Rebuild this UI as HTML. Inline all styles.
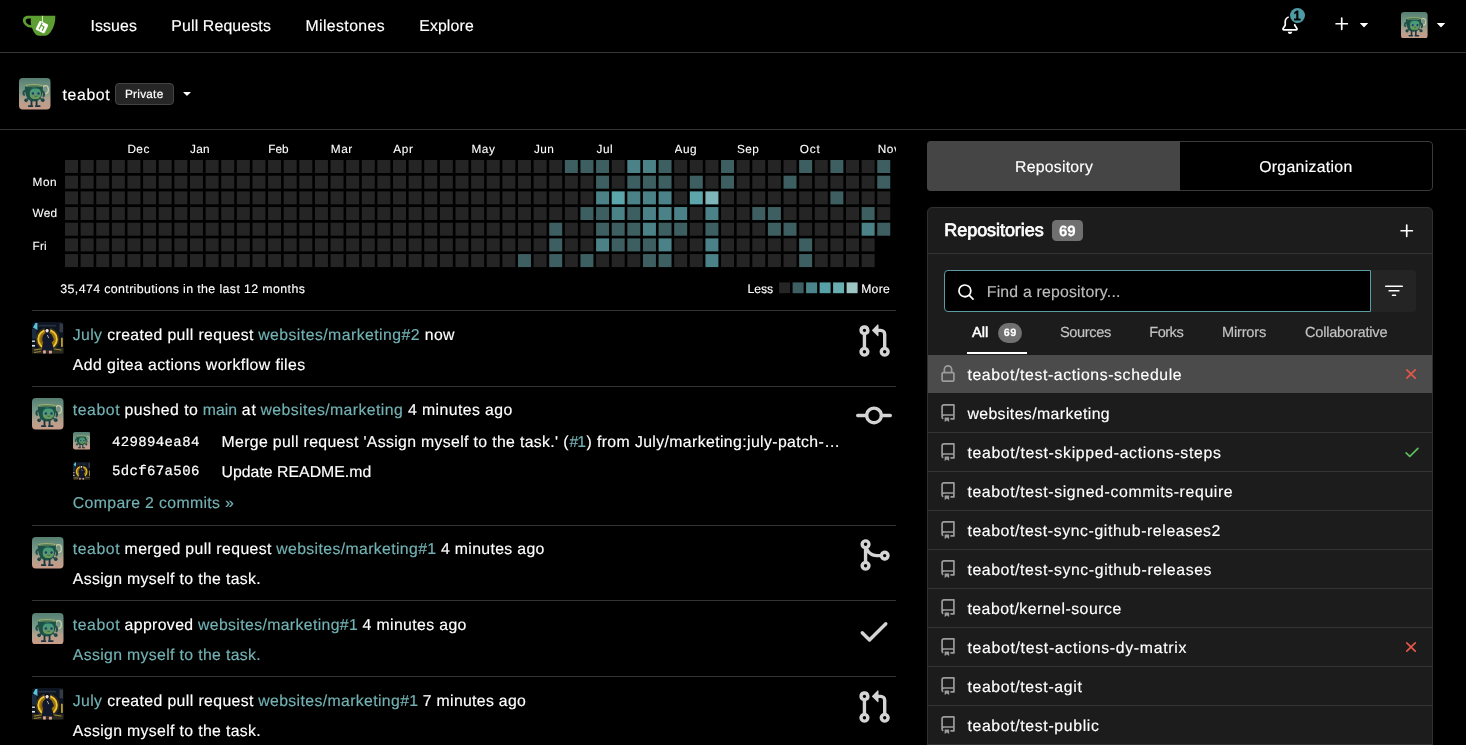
<!DOCTYPE html>
<html lang="en"><head><meta charset="utf-8"><title>teabot - Dashboard - Gitea</title>
<style>
html,body{margin:0;padding:0;background:#000;}
body{width:1466px;height:745px;overflow:hidden;position:relative;font-family:"Liberation Sans",sans-serif;color:#fff;text-rendering:geometricPrecision;}
.abs{position:absolute;display:block;}
.t{position:absolute;white-space:pre;line-height:1;-webkit-text-stroke:0.16px;text-decoration:none;color:#fff;}
#root{position:absolute;left:0;top:0;width:1466px;height:745px;will-change:transform;}
</style></head><body><div id="root">
<svg width="0" height="0" style="position:absolute"><defs><linearGradient id="tbg" x1="0" y1="0" x2="0" y2="1"><stop offset="0" stop-color="#557f72"/><stop offset="0.42" stop-color="#7a9a8a"/><stop offset="0.7" stop-color="#b3a08c"/><stop offset="1" stop-color="#c99c89"/></linearGradient>
<linearGradient id="tface" x1="0" y1="0" x2="0" y2="1"><stop offset="0" stop-color="#3f9a80"/><stop offset="1" stop-color="#6f9a58"/></linearGradient>
<radialGradient id="jglow" cx="0.5" cy="0.5" r="0.5"><stop offset="0" stop-color="#f2c53a"/><stop offset="0.7" stop-color="#d9a21c"/><stop offset="1" stop-color="#6a5418"/></radialGradient></defs></svg>
<nav class="navbar">
<div class="abs" style="left:0px;top:52px;width:1466px;height:1px;background:#363636"></div>
<svg class="abs logo" style="left:22px;top:14px" width="35" height="24" viewBox="0 0 35 24">
<path d="M9.200 1.800H33.300c.300 5.500-1.200 11.500-4.300 15.800c-1.400 2-3 4.200-5.600 4.200H17.300c-2.700 0-4.600-2.300-5.800-4.600c-.6-1.100-1.100-2.300-1.500-3.500C5.300 13.800 1 10.600.900 6.500C.800 3.300 3.400 1.700 6.200 1.800Zm-.300 2.700C5 4.400 3.600 5 3.700 6.700c.2 2.500 2.700 4.300 5.500 4.500c-.5-2.100-.5-4.500-.3-6.700Z" fill="#5c9e31"/>
<path d="M20.500 1.800V8" stroke="#cfe8b6" stroke-width="1.100"/>
<g transform="translate(20 13.100) rotate(26)"><rect x="-4.900" y="-4.900" width="9.800" height="9.800" rx="1.200" fill="#fff"/><path d="M-1.700 -4v7.200M1.700 -1.500v4.700M-1.700 -1.200h2.300c.7 0 1.100.400 1.100 1" stroke="#5c9e31" stroke-width="1.200" fill="none"/></g>
</svg>
<svg class="abs " style="left:1280.7px;top:15.8px" width="18" height="18" viewBox="0 0 16 16" fill="#fff"><path d="M8 16a2 2 0 0 0 1.985-1.750c.017-.137-.097-.250-.235-.250h-3.500c-.138 0-.252.113-.235.250A2 2 0 0 0 8 16ZM3 5a5 5 0 0 1 10 0v2.947c0 .050.015.098.042.139l1.703 2.555A1.519 1.519 0 0 1 13.482 13H2.518a1.516 1.516 0 0 1-1.263-2.360l1.703-2.554A.255.255 0 0 0 3 7.947Zm5-3.500A3.500 3.500 0 0 0 4.500 5v2.947c0 .346-.102.683-.294.970l-1.703 2.556a.017.017 0 0 0-.003.010l.001.006c0 .002.002.004.004.006l.006.004.007.001h10.964l.007-.001.006-.004.004-.006.001-.007a.017.017 0 0 0-.003-.010l-1.703-2.554a1.745 1.745 0 0 1-.294-.970V5A3.500 3.500 0 0 0 8 1.500Z"/></svg>
<div class="abs badge" style="left:1289.8px;top:7.8px;width:15px;height:15px;background:#4f9ba4;border-radius:50%;box-shadow:0 0 0 1.6px #000"></div>
<svg class="abs " style="left:1333px;top:15.2px" width="18" height="18" viewBox="0 0 16 16" fill="#fff"><path d="M7.750 2a.750.750 0 0 1 .750.750V7h4.250a.750.750 0 0 1 0 1.500H8.500v4.250a.750.750 0 0 1-1.500 0V8.500H2.750a.750.750 0 0 1 0-1.500H7V2.750A.750.750 0 0 1 7.750 2Z"/></svg>
<svg class="abs " style="left:1355.1px;top:15.2px" width="18" height="18" viewBox="0 0 16 16" fill="#fff"><path d="m4.427 7.427 3.396 3.396a.250.250 0 0 0 .354 0l3.396-3.396A.250.250 0 0 0 11.396 7H4.604a.250.250 0 0 0-.177.427Z"/></svg>
<svg class="abs avatar" style="left:1401px;top:11.7px" width="26.6" height="26.6" viewBox="0 0 31 31"><rect width="31" height="31" rx="3.600" fill="url(#tbg)"/>
<ellipse cx="26" cy="11.400" rx="2.900" ry="3.900" fill="none" stroke="#cfcaa4" stroke-width="1.300"/>
<path d="M5.900 7.600h17.600c.400 5.200-.500 9.800-2.800 12.900c-2.500 3.400-9.500 3.400-12 0C6.400 17.400 5.500 12.800 5.900 7.600Z" fill="#1d5248"/>
<ellipse cx="14.700" cy="7.600" rx="8.800" ry="1.600" fill="#9fae6b"/>
<ellipse cx="14.700" cy="8" rx="7.400" ry="0.900" fill="#44755a"/>
<rect x="10.600" y="10.300" width="11" height="10.400" rx="4.200" fill="url(#tface)"/>
<circle cx="13.700" cy="15.300" r="1.200" fill="#1d3a70"/><circle cx="19.200" cy="15.300" r="1.200" fill="#1d3a70"/>
<path d="M15.100 17.700q1.400 .9 2.800 0" stroke="#245046" stroke-width=".700" fill="none"/>
<path d="M6.300 12.300c-2.200 .600 -2.500 3 -1.300 4.300M23.300 13c1.600 1.500 1.800 3.300 .8 4.800" stroke="#24504a" stroke-width="2" fill="none" stroke-linecap="round"/>
<circle cx="7" cy="22" r="1.800" fill="#1e3d44"/><circle cx="23.400" cy="21.800" r="1.800" fill="#1e3d44"/>
<path d="M9.200 19.800l-1.900 2M20.500 19.800l2.500 1.800" stroke="#24504a" stroke-width="1.500" stroke-linecap="round"/>
<path d="M12.300 22v5.200M17.300 22v5.200" stroke="#1b3440" stroke-width="1.800"/>
<path d="M9.600 27.600h3.600M16.600 27.600h3.800" stroke="#1b3440" stroke-width="1.800" stroke-linecap="round"/></svg>
<svg class="abs " style="left:1431.7px;top:15.2px" width="18" height="18" viewBox="0 0 16 16" fill="#fff"><path d="m4.427 7.427 3.396 3.396a.250.250 0 0 0 .354 0l3.396-3.396A.250.250 0 0 0 11.396 7H4.604a.250.250 0 0 0-.177.427Z"/></svg>
<a class="t" style="left:90.4px;top:19px;font-size:15.8px;letter-spacing:0.147px;">Issues</a>
<a class="t" style="left:171.3px;top:19px;font-size:15.8px;letter-spacing:0.168px;">Pull Requests</a>
<a class="t" style="left:305.4px;top:19px;font-size:15.8px;letter-spacing:0.420px;">Milestones</a>
<a class="t" style="left:419.2px;top:19px;font-size:15.8px;letter-spacing:0.154px;">Explore</a>
<a class="t" style="left:1293.4px;top:9px;font-size:13px;color:#000;-webkit-text-stroke:0.9px;">1</a>
</nav>
<div class="dashboard-context">
<div class="abs" style="left:0px;top:128.5px;width:1466px;height:1px;background:#363636"></div>
<div class="abs" style="left:115px;top:83px;width:59px;height:22px;box-sizing:border-box;background:#262626;border:1px solid #444;border-radius:4px"></div>
<svg class="abs avatar" style="left:19px;top:78px" width="31.5" height="31.5" viewBox="0 0 31 31"><rect width="31" height="31" rx="3.600" fill="url(#tbg)"/>
<ellipse cx="26" cy="11.400" rx="2.900" ry="3.900" fill="none" stroke="#cfcaa4" stroke-width="1.300"/>
<path d="M5.900 7.600h17.600c.400 5.200-.500 9.800-2.800 12.900c-2.500 3.400-9.500 3.400-12 0C6.400 17.400 5.500 12.800 5.900 7.600Z" fill="#1d5248"/>
<ellipse cx="14.700" cy="7.600" rx="8.800" ry="1.600" fill="#9fae6b"/>
<ellipse cx="14.700" cy="8" rx="7.400" ry="0.900" fill="#44755a"/>
<rect x="10.600" y="10.300" width="11" height="10.400" rx="4.200" fill="url(#tface)"/>
<circle cx="13.700" cy="15.300" r="1.200" fill="#1d3a70"/><circle cx="19.200" cy="15.300" r="1.200" fill="#1d3a70"/>
<path d="M15.100 17.700q1.400 .9 2.800 0" stroke="#245046" stroke-width=".700" fill="none"/>
<path d="M6.300 12.300c-2.200 .600 -2.500 3 -1.300 4.300M23.300 13c1.600 1.500 1.800 3.300 .8 4.800" stroke="#24504a" stroke-width="2" fill="none" stroke-linecap="round"/>
<circle cx="7" cy="22" r="1.800" fill="#1e3d44"/><circle cx="23.400" cy="21.800" r="1.800" fill="#1e3d44"/>
<path d="M9.200 19.800l-1.900 2M20.500 19.800l2.500 1.800" stroke="#24504a" stroke-width="1.500" stroke-linecap="round"/>
<path d="M12.300 22v5.200M17.300 22v5.200" stroke="#1b3440" stroke-width="1.800"/>
<path d="M9.600 27.600h3.600M16.600 27.600h3.800" stroke="#1b3440" stroke-width="1.800" stroke-linecap="round"/></svg>
<svg class="abs " style="left:179.3px;top:85.0px" width="16" height="16" viewBox="0 0 16 16" fill="#fff"><path d="m4.427 7.427 3.396 3.396a.250.250 0 0 0 .354 0l3.396-3.396A.250.250 0 0 0 11.396 7H4.604a.250.250 0 0 0-.177.427Z"/></svg>
<span class="t" style="left:62.5px;top:88px;font-size:15.8px;letter-spacing:0.654px;">teabot</span>
<span class="t" style="left:125.0px;top:89px;font-size:11.8px;letter-spacing:0.246px;-webkit-text-stroke:0.2px;">Private</span>
</div>
<main class="dashboard-feeds">
<section class="heatmap">

<svg class="abs" style="left:0;top:0" width="900" height="300"><g fill="#252525"><rect x="65.00" y="160.00" width="13" height="13"/><rect x="65.00" y="175.68" width="13" height="13"/><rect x="65.00" y="191.36" width="13" height="13"/><rect x="65.00" y="207.04" width="13" height="13"/><rect x="65.00" y="222.72" width="13" height="13"/><rect x="65.00" y="238.40" width="13" height="13"/><rect x="65.00" y="254.08" width="13" height="13"/><rect x="80.62" y="160.00" width="13" height="13"/><rect x="80.62" y="175.68" width="13" height="13"/><rect x="80.62" y="191.36" width="13" height="13"/><rect x="80.62" y="207.04" width="13" height="13"/><rect x="80.62" y="222.72" width="13" height="13"/><rect x="80.62" y="238.40" width="13" height="13"/><rect x="80.62" y="254.08" width="13" height="13"/><rect x="96.24" y="160.00" width="13" height="13"/><rect x="96.24" y="175.68" width="13" height="13"/><rect x="96.24" y="191.36" width="13" height="13"/><rect x="96.24" y="207.04" width="13" height="13"/><rect x="96.24" y="222.72" width="13" height="13"/><rect x="96.24" y="238.40" width="13" height="13"/><rect x="96.24" y="254.08" width="13" height="13"/><rect x="111.86" y="160.00" width="13" height="13"/><rect x="111.86" y="175.68" width="13" height="13"/><rect x="111.86" y="191.36" width="13" height="13"/><rect x="111.86" y="207.04" width="13" height="13"/><rect x="111.86" y="222.72" width="13" height="13"/><rect x="111.86" y="238.40" width="13" height="13"/><rect x="111.86" y="254.08" width="13" height="13"/><rect x="127.48" y="160.00" width="13" height="13"/><rect x="127.48" y="175.68" width="13" height="13"/><rect x="127.48" y="191.36" width="13" height="13"/><rect x="127.48" y="207.04" width="13" height="13"/><rect x="127.48" y="222.72" width="13" height="13"/><rect x="127.48" y="238.40" width="13" height="13"/><rect x="127.48" y="254.08" width="13" height="13"/><rect x="143.10" y="160.00" width="13" height="13"/><rect x="143.10" y="175.68" width="13" height="13"/><rect x="143.10" y="191.36" width="13" height="13"/><rect x="143.10" y="207.04" width="13" height="13"/><rect x="143.10" y="222.72" width="13" height="13"/><rect x="143.10" y="238.40" width="13" height="13"/><rect x="143.10" y="254.08" width="13" height="13"/><rect x="158.72" y="160.00" width="13" height="13"/><rect x="158.72" y="175.68" width="13" height="13"/><rect x="158.72" y="191.36" width="13" height="13"/><rect x="158.72" y="207.04" width="13" height="13"/><rect x="158.72" y="222.72" width="13" height="13"/><rect x="158.72" y="238.40" width="13" height="13"/><rect x="158.72" y="254.08" width="13" height="13"/><rect x="174.34" y="160.00" width="13" height="13"/><rect x="174.34" y="175.68" width="13" height="13"/><rect x="174.34" y="191.36" width="13" height="13"/><rect x="174.34" y="207.04" width="13" height="13"/><rect x="174.34" y="222.72" width="13" height="13"/><rect x="174.34" y="238.40" width="13" height="13"/><rect x="174.34" y="254.08" width="13" height="13"/><rect x="189.96" y="160.00" width="13" height="13"/><rect x="189.96" y="175.68" width="13" height="13"/><rect x="189.96" y="191.36" width="13" height="13"/><rect x="189.96" y="207.04" width="13" height="13"/><rect x="189.96" y="222.72" width="13" height="13"/><rect x="189.96" y="238.40" width="13" height="13"/><rect x="189.96" y="254.08" width="13" height="13"/><rect x="205.58" y="160.00" width="13" height="13"/><rect x="205.58" y="175.68" width="13" height="13"/><rect x="205.58" y="191.36" width="13" height="13"/><rect x="205.58" y="207.04" width="13" height="13"/><rect x="205.58" y="222.72" width="13" height="13"/><rect x="205.58" y="238.40" width="13" height="13"/><rect x="205.58" y="254.08" width="13" height="13"/><rect x="221.20" y="160.00" width="13" height="13"/><rect x="221.20" y="175.68" width="13" height="13"/><rect x="221.20" y="191.36" width="13" height="13"/><rect x="221.20" y="207.04" width="13" height="13"/><rect x="221.20" y="222.72" width="13" height="13"/><rect x="221.20" y="238.40" width="13" height="13"/><rect x="221.20" y="254.08" width="13" height="13"/><rect x="236.82" y="160.00" width="13" height="13"/><rect x="236.82" y="175.68" width="13" height="13"/><rect x="236.82" y="191.36" width="13" height="13"/><rect x="236.82" y="207.04" width="13" height="13"/><rect x="236.82" y="222.72" width="13" height="13"/><rect x="236.82" y="238.40" width="13" height="13"/><rect x="236.82" y="254.08" width="13" height="13"/><rect x="252.44" y="160.00" width="13" height="13"/><rect x="252.44" y="175.68" width="13" height="13"/><rect x="252.44" y="191.36" width="13" height="13"/><rect x="252.44" y="207.04" width="13" height="13"/><rect x="252.44" y="222.72" width="13" height="13"/><rect x="252.44" y="238.40" width="13" height="13"/><rect x="252.44" y="254.08" width="13" height="13"/><rect x="268.06" y="160.00" width="13" height="13"/><rect x="268.06" y="175.68" width="13" height="13"/><rect x="268.06" y="191.36" width="13" height="13"/><rect x="268.06" y="207.04" width="13" height="13"/><rect x="268.06" y="222.72" width="13" height="13"/><rect x="268.06" y="238.40" width="13" height="13"/><rect x="268.06" y="254.08" width="13" height="13"/><rect x="283.68" y="160.00" width="13" height="13"/><rect x="283.68" y="175.68" width="13" height="13"/><rect x="283.68" y="191.36" width="13" height="13"/><rect x="283.68" y="207.04" width="13" height="13"/><rect x="283.68" y="222.72" width="13" height="13"/><rect x="283.68" y="238.40" width="13" height="13"/><rect x="283.68" y="254.08" width="13" height="13"/><rect x="299.30" y="160.00" width="13" height="13"/><rect x="299.30" y="175.68" width="13" height="13"/><rect x="299.30" y="191.36" width="13" height="13"/><rect x="299.30" y="207.04" width="13" height="13"/><rect x="299.30" y="222.72" width="13" height="13"/><rect x="299.30" y="238.40" width="13" height="13"/><rect x="299.30" y="254.08" width="13" height="13"/><rect x="314.92" y="160.00" width="13" height="13"/><rect x="314.92" y="175.68" width="13" height="13"/><rect x="314.92" y="191.36" width="13" height="13"/><rect x="314.92" y="207.04" width="13" height="13"/><rect x="314.92" y="222.72" width="13" height="13"/><rect x="314.92" y="238.40" width="13" height="13"/><rect x="314.92" y="254.08" width="13" height="13"/><rect x="330.54" y="160.00" width="13" height="13"/><rect x="330.54" y="175.68" width="13" height="13"/><rect x="330.54" y="191.36" width="13" height="13"/><rect x="330.54" y="207.04" width="13" height="13"/><rect x="330.54" y="222.72" width="13" height="13"/><rect x="330.54" y="238.40" width="13" height="13"/><rect x="330.54" y="254.08" width="13" height="13"/><rect x="346.16" y="160.00" width="13" height="13"/><rect x="346.16" y="175.68" width="13" height="13"/><rect x="346.16" y="191.36" width="13" height="13"/><rect x="346.16" y="207.04" width="13" height="13"/><rect x="346.16" y="222.72" width="13" height="13"/><rect x="346.16" y="238.40" width="13" height="13"/><rect x="346.16" y="254.08" width="13" height="13"/><rect x="361.78" y="160.00" width="13" height="13"/><rect x="361.78" y="175.68" width="13" height="13"/><rect x="361.78" y="191.36" width="13" height="13"/><rect x="361.78" y="207.04" width="13" height="13"/><rect x="361.78" y="222.72" width="13" height="13"/><rect x="361.78" y="238.40" width="13" height="13"/><rect x="361.78" y="254.08" width="13" height="13"/><rect x="377.40" y="160.00" width="13" height="13"/><rect x="377.40" y="175.68" width="13" height="13"/><rect x="377.40" y="191.36" width="13" height="13"/><rect x="377.40" y="207.04" width="13" height="13"/><rect x="377.40" y="222.72" width="13" height="13"/><rect x="377.40" y="238.40" width="13" height="13"/><rect x="377.40" y="254.08" width="13" height="13"/><rect x="393.02" y="160.00" width="13" height="13"/><rect x="393.02" y="175.68" width="13" height="13"/><rect x="393.02" y="191.36" width="13" height="13"/><rect x="393.02" y="207.04" width="13" height="13"/><rect x="393.02" y="222.72" width="13" height="13"/><rect x="393.02" y="238.40" width="13" height="13"/><rect x="393.02" y="254.08" width="13" height="13"/><rect x="408.64" y="160.00" width="13" height="13"/><rect x="408.64" y="175.68" width="13" height="13"/><rect x="408.64" y="191.36" width="13" height="13"/><rect x="408.64" y="207.04" width="13" height="13"/><rect x="408.64" y="222.72" width="13" height="13"/><rect x="408.64" y="238.40" width="13" height="13"/><rect x="408.64" y="254.08" width="13" height="13"/><rect x="424.26" y="160.00" width="13" height="13"/><rect x="424.26" y="175.68" width="13" height="13"/><rect x="424.26" y="191.36" width="13" height="13"/><rect x="424.26" y="207.04" width="13" height="13"/><rect x="424.26" y="222.72" width="13" height="13"/><rect x="424.26" y="238.40" width="13" height="13"/><rect x="424.26" y="254.08" width="13" height="13"/><rect x="439.88" y="160.00" width="13" height="13"/><rect x="439.88" y="175.68" width="13" height="13"/><rect x="439.88" y="191.36" width="13" height="13"/><rect x="439.88" y="207.04" width="13" height="13"/><rect x="439.88" y="222.72" width="13" height="13"/><rect x="439.88" y="238.40" width="13" height="13"/><rect x="439.88" y="254.08" width="13" height="13"/><rect x="455.50" y="160.00" width="13" height="13"/><rect x="455.50" y="175.68" width="13" height="13"/><rect x="455.50" y="191.36" width="13" height="13"/><rect x="455.50" y="207.04" width="13" height="13"/><rect x="455.50" y="222.72" width="13" height="13"/><rect x="455.50" y="238.40" width="13" height="13"/><rect x="455.50" y="254.08" width="13" height="13"/><rect x="471.12" y="160.00" width="13" height="13"/><rect x="471.12" y="175.68" width="13" height="13"/><rect x="471.12" y="191.36" width="13" height="13"/><rect x="471.12" y="207.04" width="13" height="13"/><rect x="471.12" y="222.72" width="13" height="13"/><rect x="471.12" y="238.40" width="13" height="13"/><rect x="471.12" y="254.08" width="13" height="13"/><rect x="486.74" y="160.00" width="13" height="13"/><rect x="486.74" y="175.68" width="13" height="13"/><rect x="486.74" y="191.36" width="13" height="13"/><rect x="486.74" y="207.04" width="13" height="13"/><rect x="486.74" y="222.72" width="13" height="13"/><rect x="486.74" y="238.40" width="13" height="13"/><rect x="486.74" y="254.08" width="13" height="13"/><rect x="502.36" y="160.00" width="13" height="13"/><rect x="502.36" y="175.68" width="13" height="13"/><rect x="502.36" y="191.36" width="13" height="13"/><rect x="502.36" y="207.04" width="13" height="13"/><rect x="502.36" y="222.72" width="13" height="13"/><rect x="502.36" y="238.40" width="13" height="13"/><rect x="502.36" y="254.08" width="13" height="13"/><rect x="517.98" y="160.00" width="13" height="13"/><rect x="517.98" y="175.68" width="13" height="13"/><rect x="517.98" y="191.36" width="13" height="13"/><rect x="517.98" y="207.04" width="13" height="13"/><rect x="517.98" y="222.72" width="13" height="13"/><rect x="517.98" y="238.40" width="13" height="13"/><rect x="533.60" y="160.00" width="13" height="13"/><rect x="533.60" y="175.68" width="13" height="13"/><rect x="533.60" y="191.36" width="13" height="13"/><rect x="533.60" y="207.04" width="13" height="13"/><rect x="533.60" y="222.72" width="13" height="13"/><rect x="533.60" y="238.40" width="13" height="13"/><rect x="533.60" y="254.08" width="13" height="13"/><rect x="549.22" y="160.00" width="13" height="13"/><rect x="549.22" y="175.68" width="13" height="13"/><rect x="549.22" y="191.36" width="13" height="13"/><rect x="549.22" y="207.04" width="13" height="13"/><rect x="564.84" y="175.68" width="13" height="13"/><rect x="564.84" y="191.36" width="13" height="13"/><rect x="564.84" y="207.04" width="13" height="13"/><rect x="564.84" y="222.72" width="13" height="13"/><rect x="564.84" y="238.40" width="13" height="13"/><rect x="564.84" y="254.08" width="13" height="13"/><rect x="580.46" y="175.68" width="13" height="13"/><rect x="580.46" y="191.36" width="13" height="13"/><rect x="580.46" y="222.72" width="13" height="13"/><rect x="580.46" y="238.40" width="13" height="13"/><rect x="596.08" y="254.08" width="13" height="13"/><rect x="611.70" y="160.00" width="13" height="13"/><rect x="611.70" y="175.68" width="13" height="13"/><rect x="611.70" y="254.08" width="13" height="13"/><rect x="627.32" y="254.08" width="13" height="13"/><rect x="674.18" y="160.00" width="13" height="13"/><rect x="674.18" y="175.68" width="13" height="13"/><rect x="674.18" y="191.36" width="13" height="13"/><rect x="674.18" y="238.40" width="13" height="13"/><rect x="674.18" y="254.08" width="13" height="13"/><rect x="689.80" y="160.00" width="13" height="13"/><rect x="689.80" y="207.04" width="13" height="13"/><rect x="689.80" y="222.72" width="13" height="13"/><rect x="689.80" y="238.40" width="13" height="13"/><rect x="689.80" y="254.08" width="13" height="13"/><rect x="705.42" y="160.00" width="13" height="13"/><rect x="705.42" y="175.68" width="13" height="13"/><rect x="721.04" y="191.36" width="13" height="13"/><rect x="721.04" y="207.04" width="13" height="13"/><rect x="721.04" y="222.72" width="13" height="13"/><rect x="721.04" y="238.40" width="13" height="13"/><rect x="721.04" y="254.08" width="13" height="13"/><rect x="736.66" y="160.00" width="13" height="13"/><rect x="736.66" y="175.68" width="13" height="13"/><rect x="736.66" y="191.36" width="13" height="13"/><rect x="736.66" y="207.04" width="13" height="13"/><rect x="736.66" y="222.72" width="13" height="13"/><rect x="736.66" y="238.40" width="13" height="13"/><rect x="736.66" y="254.08" width="13" height="13"/><rect x="752.28" y="160.00" width="13" height="13"/><rect x="752.28" y="175.68" width="13" height="13"/><rect x="752.28" y="191.36" width="13" height="13"/><rect x="752.28" y="222.72" width="13" height="13"/><rect x="752.28" y="238.40" width="13" height="13"/><rect x="752.28" y="254.08" width="13" height="13"/><rect x="767.90" y="160.00" width="13" height="13"/><rect x="767.90" y="175.68" width="13" height="13"/><rect x="767.90" y="191.36" width="13" height="13"/><rect x="767.90" y="238.40" width="13" height="13"/><rect x="767.90" y="254.08" width="13" height="13"/><rect x="783.52" y="160.00" width="13" height="13"/><rect x="783.52" y="191.36" width="13" height="13"/><rect x="783.52" y="207.04" width="13" height="13"/><rect x="783.52" y="238.40" width="13" height="13"/><rect x="783.52" y="254.08" width="13" height="13"/><rect x="799.14" y="175.68" width="13" height="13"/><rect x="799.14" y="191.36" width="13" height="13"/><rect x="799.14" y="207.04" width="13" height="13"/><rect x="799.14" y="222.72" width="13" height="13"/><rect x="814.76" y="160.00" width="13" height="13"/><rect x="814.76" y="175.68" width="13" height="13"/><rect x="814.76" y="191.36" width="13" height="13"/><rect x="814.76" y="207.04" width="13" height="13"/><rect x="814.76" y="222.72" width="13" height="13"/><rect x="814.76" y="238.40" width="13" height="13"/><rect x="814.76" y="254.08" width="13" height="13"/><rect x="830.38" y="175.68" width="13" height="13"/><rect x="830.38" y="207.04" width="13" height="13"/><rect x="830.38" y="222.72" width="13" height="13"/><rect x="830.38" y="238.40" width="13" height="13"/><rect x="830.38" y="254.08" width="13" height="13"/><rect x="846.00" y="160.00" width="13" height="13"/><rect x="846.00" y="175.68" width="13" height="13"/><rect x="846.00" y="191.36" width="13" height="13"/><rect x="846.00" y="207.04" width="13" height="13"/><rect x="846.00" y="222.72" width="13" height="13"/><rect x="846.00" y="238.40" width="13" height="13"/><rect x="846.00" y="254.08" width="13" height="13"/><rect x="861.62" y="160.00" width="13" height="13"/><rect x="861.62" y="175.68" width="13" height="13"/><rect x="861.62" y="191.36" width="13" height="13"/><rect x="861.62" y="238.40" width="13" height="13"/><rect x="861.62" y="254.08" width="13" height="13"/><rect x="877.24" y="191.36" width="13" height="13"/><rect x="877.24" y="207.04" width="13" height="13"/></g>
<g fill="#3d5f61"><rect x="517.98" y="254.08" width="13" height="13"/><rect x="549.22" y="222.72" width="13" height="13"/><rect x="549.22" y="238.40" width="13" height="13"/><rect x="549.22" y="254.08" width="13" height="13"/><rect x="564.84" y="160.00" width="13" height="13"/><rect x="580.46" y="160.00" width="13" height="13"/><rect x="580.46" y="207.04" width="13" height="13"/><rect x="580.46" y="254.08" width="13" height="13"/><rect x="596.08" y="160.00" width="13" height="13"/><rect x="596.08" y="175.68" width="13" height="13"/><rect x="596.08" y="207.04" width="13" height="13"/><rect x="596.08" y="222.72" width="13" height="13"/><rect x="611.70" y="222.72" width="13" height="13"/><rect x="611.70" y="238.40" width="13" height="13"/><rect x="627.32" y="175.68" width="13" height="13"/><rect x="627.32" y="207.04" width="13" height="13"/><rect x="627.32" y="222.72" width="13" height="13"/><rect x="627.32" y="238.40" width="13" height="13"/><rect x="642.94" y="175.68" width="13" height="13"/><rect x="642.94" y="238.40" width="13" height="13"/><rect x="642.94" y="254.08" width="13" height="13"/><rect x="658.56" y="160.00" width="13" height="13"/><rect x="658.56" y="175.68" width="13" height="13"/><rect x="658.56" y="222.72" width="13" height="13"/><rect x="658.56" y="254.08" width="13" height="13"/><rect x="674.18" y="222.72" width="13" height="13"/><rect x="689.80" y="175.68" width="13" height="13"/><rect x="705.42" y="222.72" width="13" height="13"/><rect x="721.04" y="160.00" width="13" height="13"/><rect x="721.04" y="175.68" width="13" height="13"/><rect x="752.28" y="207.04" width="13" height="13"/><rect x="767.90" y="207.04" width="13" height="13"/><rect x="767.90" y="222.72" width="13" height="13"/><rect x="783.52" y="175.68" width="13" height="13"/><rect x="783.52" y="222.72" width="13" height="13"/><rect x="799.14" y="160.00" width="13" height="13"/><rect x="799.14" y="238.40" width="13" height="13"/><rect x="799.14" y="254.08" width="13" height="13"/><rect x="830.38" y="160.00" width="13" height="13"/><rect x="830.38" y="191.36" width="13" height="13"/><rect x="861.62" y="207.04" width="13" height="13"/><rect x="877.24" y="160.00" width="13" height="13"/><rect x="877.24" y="175.68" width="13" height="13"/><rect x="877.24" y="222.72" width="13" height="13"/></g>
<g fill="#4a8288"><rect x="596.08" y="191.36" width="13" height="13"/><rect x="596.08" y="238.40" width="13" height="13"/><rect x="611.70" y="207.04" width="13" height="13"/><rect x="627.32" y="160.00" width="13" height="13"/><rect x="627.32" y="191.36" width="13" height="13"/><rect x="642.94" y="160.00" width="13" height="13"/><rect x="642.94" y="191.36" width="13" height="13"/><rect x="642.94" y="207.04" width="13" height="13"/><rect x="642.94" y="222.72" width="13" height="13"/><rect x="658.56" y="191.36" width="13" height="13"/><rect x="658.56" y="207.04" width="13" height="13"/><rect x="658.56" y="238.40" width="13" height="13"/><rect x="674.18" y="207.04" width="13" height="13"/><rect x="705.42" y="207.04" width="13" height="13"/><rect x="705.42" y="238.40" width="13" height="13"/><rect x="705.42" y="254.08" width="13" height="13"/><rect x="861.62" y="222.72" width="13" height="13"/></g>
<g fill="#5ba5ab"><rect x="611.70" y="191.36" width="13" height="13"/><rect x="689.80" y="191.36" width="13" height="13"/></g>
<g fill="#7fb6ba"><rect x="705.42" y="191.36" width="13" height="13"/></g>
<rect x="779.10" y="282.4" width="11" height="10.8" fill="#252525"/><rect x="792.60" y="282.4" width="11" height="10.8" fill="#3d5f61"/><rect x="806.10" y="282.4" width="11" height="10.8" fill="#4b858b"/><rect x="819.60" y="282.4" width="11" height="10.8" fill="#58a0a8"/><rect x="833.10" y="282.4" width="11" height="10.8" fill="#68aeb0"/><rect x="846.60" y="282.4" width="11" height="10.8" fill="#9cc5c3"/></svg>

<span class="t" style="left:127.4px;top:144px;font-size:11.8px;letter-spacing:0.458px;-webkit-text-stroke:0.1px;max-width:768.2px;overflow:hidden;">Dec</span>
<span class="t" style="left:190.0px;top:144px;font-size:11.8px;letter-spacing:0.237px;-webkit-text-stroke:0.1px;max-width:705.6px;overflow:hidden;">Jan</span>
<span class="t" style="left:268.3px;top:144px;font-size:11.8px;letter-spacing:-0.017px;-webkit-text-stroke:0.1px;max-width:627.3px;overflow:hidden;">Feb</span>
<span class="t" style="left:330.8px;top:144px;font-size:11.8px;letter-spacing:0.589px;-webkit-text-stroke:0.1px;max-width:564.8px;overflow:hidden;">Mar</span>
<span class="t" style="left:393.3px;top:144px;font-size:11.8px;letter-spacing:0.618px;-webkit-text-stroke:0.1px;max-width:502.3px;overflow:hidden;">Apr</span>
<span class="t" style="left:471.4px;top:144px;font-size:11.8px;letter-spacing:0.604px;-webkit-text-stroke:0.1px;max-width:424.2px;overflow:hidden;">May</span>
<span class="t" style="left:533.9px;top:144px;font-size:11.8px;letter-spacing:0.487px;-webkit-text-stroke:0.1px;max-width:361.7px;overflow:hidden;">Jun</span>
<span class="t" style="left:596.4px;top:144px;font-size:11.8px;letter-spacing:0.608px;-webkit-text-stroke:0.1px;max-width:299.2px;overflow:hidden;">Jul</span>
<span class="t" style="left:674.6px;top:144px;font-size:11.8px;letter-spacing:0.502px;-webkit-text-stroke:0.1px;max-width:221.0px;overflow:hidden;">Aug</span>
<span class="t" style="left:737.1px;top:144px;font-size:11.8px;letter-spacing:0.302px;-webkit-text-stroke:0.1px;max-width:158.5px;overflow:hidden;">Sep</span>
<span class="t" style="left:799.7px;top:144px;font-size:11.8px;letter-spacing:0.922px;-webkit-text-stroke:0.1px;max-width:95.9px;overflow:hidden;">Oct</span>
<span class="t" style="left:877.8px;top:144px;font-size:11.8px;letter-spacing:0.508px;-webkit-text-stroke:0.1px;max-width:17.8px;overflow:hidden;">Nov</span>
<span class="t" style="left:32.5px;top:177px;font-size:11.8px;letter-spacing:0.572px;-webkit-text-stroke:0.1px;">Mon</span>
<span class="t" style="left:32.5px;top:208px;font-size:11.8px;letter-spacing:0.225px;-webkit-text-stroke:0.1px;">Wed</span>
<span class="t" style="left:32.5px;top:241px;font-size:11.8px;letter-spacing:0.170px;-webkit-text-stroke:0.1px;">Fri</span>
<span class="t" style="left:60.3px;top:283px;font-size:12.4px;letter-spacing:0.370px;-webkit-text-stroke:0.12px;">35,474 contributions in the last 12 months</span>
<span class="t" style="left:747.5px;top:283px;font-size:12.2px;letter-spacing:-0.024px;-webkit-text-stroke:0.12px;">Less</span>
<span class="t" style="left:861.2px;top:283px;font-size:12.2px;letter-spacing:0.268px;-webkit-text-stroke:0.12px;">More</span>
</section>
<section class="feeds">
<div class="abs" style="left:32px;top:310px;width:864px;height:1px;background:#333"></div>
<div class="abs" style="left:32px;top:386px;width:864px;height:1px;background:#333"></div>
<div class="abs" style="left:32px;top:525px;width:864px;height:1px;background:#333"></div>
<div class="abs" style="left:32px;top:600px;width:864px;height:1px;background:#333"></div>
<div class="abs" style="left:32px;top:676px;width:864px;height:1px;background:#333"></div>
<svg class="abs avatar" style="left:32px;top:322.2px" width="31.5" height="31.5" viewBox="0 0 32 32"><rect width="32" height="32" rx="3.600" fill="#0e1522"/>
<path d="M1 5.500L3.500 1h2v7.500Z" fill="#5cc3d6"/>
<rect x="0" y="7" width="4.500" height="10" fill="#1c2c40"/>
<rect x="28" y="1.500" width="3.500" height="9" fill="#353b42"/>
<rect x="6.500" y="2.800" width="18" height="1.800" fill="#27303c"/>
<rect x="0" y="26.500" width="32" height="5.500" fill="#2c2a1e"/>
<path d="M2 28.500l9 -1.500M20 27l10 1.500M2 31l7 -1" stroke="#a08a3a" stroke-width="1"/>
<circle cx="15.800" cy="17.600" r="12" fill="#6a4d10" opacity=".45"/>
<circle cx="15.800" cy="17.600" r="9.500" fill="#9a7210" stroke="#f0c530" stroke-width="1.900"/>
<circle cx="14.800" cy="18" r="6" fill="#5b3f0c" opacity=".4"/>
<rect x="29.600" y="16" width="1.600" height="9.300" fill="#d9b224"/>
<rect x="0" y="18.800" width="3" height="1.500" fill="#c6d0d0"/><rect x="0" y="23.300" width="3" height="1.700" fill="#dfe5e5"/>
<path d="M15.300 4.600c2.400 0 3.600 2 3.200 4.300c-.2 1-.6 1.700-1 2.200c1.800 .5 2.800 1.600 3.300 3.300c.5 1.700 1.600 2.200 1.400 3.600c-.2 1.300-1.800 1.700-2.300 2.900c1.300 2.500 2.300 5.300 2.300 8.100h-12c-.2-2.700 .2-5.300 1.300-7.800c-.8-1.500-1.300-3.200-.9-5c.4-2.200 1.300-4.200 3.300-5.100c-.7-.7-1.100-1.500-1.200-2.500c-.2-2.200 .8-4 2.600-4Z" fill="#11182c"/>
<ellipse cx="15.300" cy="8.700" rx="1.600" ry="1.900" fill="#f1e3e3"/>
<path d="M12.800 8c.3-3 4.700-3.200 5.200-.2c-1.600-1-3.500-.8-5.200 .2Z" fill="#0a0d16"/>
<path d="M15.600 13.200l1.400 3.200" stroke="#c9c2b0" stroke-width=".900"/>
<rect x="11.300" y="28.800" width="2.700" height="3.200" fill="#e3aaa3"/><rect x="17.200" y="29.200" width="3" height="2.800" fill="#dca29a"/></svg>
<svg class="abs " style="left:856px;top:322.5px" width="36" height="36" viewBox="0 0 16 16" fill="#d4d4d4"><path d="M1.500 3.250a2.250 2.250 0 1 1 3 2.122v5.256a2.251 2.251 0 1 1-1.500 0V5.372A2.250 2.250 0 0 1 1.500 3.250Zm5.677-.177L9.573.677A.250.250 0 0 1 10 .854V2.500h1A2.500 2.500 0 0 1 13.500 5v5.628a2.251 2.251 0 1 1-1.500 0V5a1 1 0 0 0-1-1h-1v1.646a.250.250 0 0 1-.427.177L7.177 3.427a.250.250 0 0 1 0-.354ZM3.750 2.500a.750.750 0 1 0 0 1.500.750.750 0 0 0 0-1.500Zm0 9.500a.750.750 0 1 0 0 1.500.750.750 0 0 0 0-1.500Zm8.250.750a.750.750 0 1 0 1.500 0 .750.750 0 0 0-1.500 0Z"/></svg>
<svg class="abs avatar" style="left:32px;top:398.2px" width="31.5" height="31.5" viewBox="0 0 31 31"><rect width="31" height="31" rx="3.600" fill="url(#tbg)"/>
<ellipse cx="26" cy="11.400" rx="2.900" ry="3.900" fill="none" stroke="#cfcaa4" stroke-width="1.300"/>
<path d="M5.900 7.600h17.600c.400 5.200-.500 9.800-2.800 12.900c-2.500 3.400-9.500 3.400-12 0C6.400 17.400 5.500 12.800 5.900 7.600Z" fill="#1d5248"/>
<ellipse cx="14.700" cy="7.600" rx="8.800" ry="1.600" fill="#9fae6b"/>
<ellipse cx="14.700" cy="8" rx="7.400" ry="0.900" fill="#44755a"/>
<rect x="10.600" y="10.300" width="11" height="10.400" rx="4.200" fill="url(#tface)"/>
<circle cx="13.700" cy="15.300" r="1.200" fill="#1d3a70"/><circle cx="19.200" cy="15.300" r="1.200" fill="#1d3a70"/>
<path d="M15.100 17.700q1.400 .9 2.800 0" stroke="#245046" stroke-width=".700" fill="none"/>
<path d="M6.300 12.300c-2.200 .600 -2.500 3 -1.300 4.300M23.300 13c1.600 1.500 1.800 3.300 .8 4.800" stroke="#24504a" stroke-width="2" fill="none" stroke-linecap="round"/>
<circle cx="7" cy="22" r="1.800" fill="#1e3d44"/><circle cx="23.400" cy="21.800" r="1.800" fill="#1e3d44"/>
<path d="M9.200 19.800l-1.900 2M20.500 19.800l2.500 1.800" stroke="#24504a" stroke-width="1.500" stroke-linecap="round"/>
<path d="M12.300 22v5.200M17.300 22v5.200" stroke="#1b3440" stroke-width="1.800"/>
<path d="M9.600 27.600h3.600M16.600 27.600h3.800" stroke="#1b3440" stroke-width="1.800" stroke-linecap="round"/></svg>
<svg class="abs " style="left:856px;top:397.9px" width="36" height="36" viewBox="0 0 16 16" fill="#d4d4d4"><path d="M11.930 8.500a4.002 4.002 0 0 1-7.860 0H.750a.750.750 0 0 1 0-1.500h3.320a4.002 4.002 0 0 1 7.860 0h3.320a.750.750 0 0 1 0 1.500Zm-1.430-.750a2.500 2.500 0 1 0-5 0 2.500 2.500 0 0 0 5 0Z"/></svg>
<svg class="abs avatar" style="left:32px;top:537px" width="31.5" height="31.5" viewBox="0 0 31 31"><rect width="31" height="31" rx="3.600" fill="url(#tbg)"/>
<ellipse cx="26" cy="11.400" rx="2.900" ry="3.900" fill="none" stroke="#cfcaa4" stroke-width="1.300"/>
<path d="M5.900 7.600h17.600c.400 5.200-.500 9.800-2.800 12.900c-2.500 3.400-9.500 3.400-12 0C6.400 17.400 5.500 12.800 5.900 7.600Z" fill="#1d5248"/>
<ellipse cx="14.700" cy="7.600" rx="8.800" ry="1.600" fill="#9fae6b"/>
<ellipse cx="14.700" cy="8" rx="7.400" ry="0.900" fill="#44755a"/>
<rect x="10.600" y="10.300" width="11" height="10.400" rx="4.200" fill="url(#tface)"/>
<circle cx="13.700" cy="15.300" r="1.200" fill="#1d3a70"/><circle cx="19.200" cy="15.300" r="1.200" fill="#1d3a70"/>
<path d="M15.100 17.700q1.400 .9 2.800 0" stroke="#245046" stroke-width=".700" fill="none"/>
<path d="M6.300 12.300c-2.200 .600 -2.500 3 -1.300 4.300M23.300 13c1.600 1.500 1.800 3.300 .8 4.800" stroke="#24504a" stroke-width="2" fill="none" stroke-linecap="round"/>
<circle cx="7" cy="22" r="1.800" fill="#1e3d44"/><circle cx="23.400" cy="21.800" r="1.800" fill="#1e3d44"/>
<path d="M9.200 19.800l-1.900 2M20.500 19.800l2.500 1.800" stroke="#24504a" stroke-width="1.500" stroke-linecap="round"/>
<path d="M12.300 22v5.200M17.300 22v5.200" stroke="#1b3440" stroke-width="1.800"/>
<path d="M9.600 27.600h3.600M16.600 27.600h3.800" stroke="#1b3440" stroke-width="1.800" stroke-linecap="round"/></svg>
<svg class="abs " style="left:856px;top:537.3px" width="36" height="36" viewBox="0 0 16 16" fill="#d4d4d4"><path d="M5.450 5.154A4.250 4.250 0 0 0 9.250 7.500h1.378a2.251 2.251 0 1 1 0 1.500H9.250A5.734 5.734 0 0 1 5 7.123v3.505a2.250 2.250 0 1 1-1.500 0V5.372a2.250 2.250 0 1 1 1.950-.218ZM4.250 13.500a.750.750 0 1 0 0-1.500.750.750 0 0 0 0 1.500Zm8.500-4.500a.750.750 0 1 0 0-1.500.750.750 0 0 0 0 1.500ZM5 3.250a.750.750 0 1 0 0 .005V3.250Z"/></svg>
<svg class="abs avatar" style="left:32px;top:612.5px" width="31.5" height="31.5" viewBox="0 0 31 31"><rect width="31" height="31" rx="3.600" fill="url(#tbg)"/>
<ellipse cx="26" cy="11.400" rx="2.900" ry="3.900" fill="none" stroke="#cfcaa4" stroke-width="1.300"/>
<path d="M5.900 7.600h17.600c.400 5.200-.500 9.800-2.800 12.900c-2.500 3.400-9.500 3.400-12 0C6.400 17.400 5.500 12.800 5.900 7.600Z" fill="#1d5248"/>
<ellipse cx="14.700" cy="7.600" rx="8.800" ry="1.600" fill="#9fae6b"/>
<ellipse cx="14.700" cy="8" rx="7.400" ry="0.900" fill="#44755a"/>
<rect x="10.600" y="10.300" width="11" height="10.400" rx="4.200" fill="url(#tface)"/>
<circle cx="13.700" cy="15.300" r="1.200" fill="#1d3a70"/><circle cx="19.200" cy="15.300" r="1.200" fill="#1d3a70"/>
<path d="M15.100 17.700q1.400 .9 2.800 0" stroke="#245046" stroke-width=".700" fill="none"/>
<path d="M6.300 12.300c-2.200 .600 -2.500 3 -1.300 4.300M23.300 13c1.600 1.500 1.800 3.300 .8 4.800" stroke="#24504a" stroke-width="2" fill="none" stroke-linecap="round"/>
<circle cx="7" cy="22" r="1.800" fill="#1e3d44"/><circle cx="23.400" cy="21.800" r="1.800" fill="#1e3d44"/>
<path d="M9.200 19.800l-1.900 2M20.500 19.800l2.500 1.800" stroke="#24504a" stroke-width="1.500" stroke-linecap="round"/>
<path d="M12.300 22v5.200M17.300 22v5.200" stroke="#1b3440" stroke-width="1.800"/>
<path d="M9.600 27.600h3.600M16.600 27.600h3.800" stroke="#1b3440" stroke-width="1.800" stroke-linecap="round"/></svg>
<svg class="abs " style="left:856px;top:612.8px" width="36" height="36" viewBox="0 0 16 16" fill="#d4d4d4"><path d="M13.780 4.220a.750.750 0 0 1 0 1.060l-7.250 7.250a.750.750 0 0 1-1.060 0L2.220 9.280a.751.751 0 0 1 .018-1.042.751.751 0 0 1 1.042-.018L6 10.940l6.720-6.720a.750.750 0 0 1 1.060 0Z"/></svg>
<svg class="abs avatar" style="left:32px;top:688.4px" width="31.5" height="31.5" viewBox="0 0 32 32"><rect width="32" height="32" rx="3.600" fill="#0e1522"/>
<path d="M1 5.500L3.500 1h2v7.500Z" fill="#5cc3d6"/>
<rect x="0" y="7" width="4.500" height="10" fill="#1c2c40"/>
<rect x="28" y="1.500" width="3.500" height="9" fill="#353b42"/>
<rect x="6.500" y="2.800" width="18" height="1.800" fill="#27303c"/>
<rect x="0" y="26.500" width="32" height="5.500" fill="#2c2a1e"/>
<path d="M2 28.500l9 -1.500M20 27l10 1.500M2 31l7 -1" stroke="#a08a3a" stroke-width="1"/>
<circle cx="15.800" cy="17.600" r="12" fill="#6a4d10" opacity=".45"/>
<circle cx="15.800" cy="17.600" r="9.500" fill="#9a7210" stroke="#f0c530" stroke-width="1.900"/>
<circle cx="14.800" cy="18" r="6" fill="#5b3f0c" opacity=".4"/>
<rect x="29.600" y="16" width="1.600" height="9.300" fill="#d9b224"/>
<rect x="0" y="18.800" width="3" height="1.500" fill="#c6d0d0"/><rect x="0" y="23.300" width="3" height="1.700" fill="#dfe5e5"/>
<path d="M15.300 4.600c2.400 0 3.600 2 3.200 4.300c-.2 1-.6 1.700-1 2.200c1.800 .5 2.800 1.600 3.300 3.300c.5 1.700 1.600 2.200 1.400 3.600c-.2 1.300-1.800 1.700-2.300 2.900c1.300 2.500 2.300 5.300 2.300 8.100h-12c-.2-2.700 .2-5.300 1.300-7.800c-.8-1.500-1.300-3.200-.9-5c.4-2.200 1.300-4.200 3.300-5.100c-.7-.7-1.100-1.500-1.200-2.500c-.2-2.200 .8-4 2.600-4Z" fill="#11182c"/>
<ellipse cx="15.300" cy="8.700" rx="1.600" ry="1.900" fill="#f1e3e3"/>
<path d="M12.800 8c.3-3 4.700-3.200 5.200-.2c-1.600-1-3.500-.8-5.200 .2Z" fill="#0a0d16"/>
<path d="M15.600 13.200l1.400 3.200" stroke="#c9c2b0" stroke-width=".900"/>
<rect x="11.300" y="28.800" width="2.700" height="3.200" fill="#e3aaa3"/><rect x="17.200" y="29.200" width="3" height="2.800" fill="#dca29a"/></svg>
<svg class="abs " style="left:856px;top:688.7px" width="36" height="36" viewBox="0 0 16 16" fill="#d4d4d4"><path d="M1.500 3.250a2.250 2.250 0 1 1 3 2.122v5.256a2.251 2.251 0 1 1-1.500 0V5.372A2.250 2.250 0 0 1 1.500 3.250Zm5.677-.177L9.573.677A.250.250 0 0 1 10 .854V2.500h1A2.500 2.500 0 0 1 13.500 5v5.628a2.251 2.251 0 1 1-1.500 0V5a1 1 0 0 0-1-1h-1v1.646a.250.250 0 0 1-.427.177L7.177 3.427a.250.250 0 0 1 0-.354ZM3.750 2.500a.750.750 0 1 0 0 1.500.750.750 0 0 0 0-1.500Zm0 9.500a.750.750 0 1 0 0 1.500.750.750 0 0 0 0-1.500Zm8.250.750a.750.750 0 1 0 1.500 0 .750.750 0 0 0-1.500 0Z"/></svg>
<svg class="abs avatar" style="left:72.8px;top:432.3px" width="17.6" height="17.6" viewBox="0 0 31 31"><rect width="31" height="31" rx="3.600" fill="url(#tbg)"/>
<ellipse cx="26" cy="11.400" rx="2.900" ry="3.900" fill="none" stroke="#cfcaa4" stroke-width="1.300"/>
<path d="M5.900 7.600h17.600c.400 5.200-.500 9.800-2.800 12.900c-2.500 3.400-9.500 3.400-12 0C6.400 17.400 5.500 12.800 5.900 7.600Z" fill="#1d5248"/>
<ellipse cx="14.700" cy="7.600" rx="8.800" ry="1.600" fill="#9fae6b"/>
<ellipse cx="14.700" cy="8" rx="7.400" ry="0.900" fill="#44755a"/>
<rect x="10.600" y="10.300" width="11" height="10.400" rx="4.200" fill="url(#tface)"/>
<circle cx="13.700" cy="15.300" r="1.200" fill="#1d3a70"/><circle cx="19.200" cy="15.300" r="1.200" fill="#1d3a70"/>
<path d="M15.100 17.700q1.400 .9 2.800 0" stroke="#245046" stroke-width=".700" fill="none"/>
<path d="M6.300 12.300c-2.200 .600 -2.500 3 -1.300 4.300M23.300 13c1.600 1.500 1.800 3.300 .8 4.800" stroke="#24504a" stroke-width="2" fill="none" stroke-linecap="round"/>
<circle cx="7" cy="22" r="1.800" fill="#1e3d44"/><circle cx="23.400" cy="21.800" r="1.800" fill="#1e3d44"/>
<path d="M9.200 19.800l-1.900 2M20.500 19.800l2.500 1.800" stroke="#24504a" stroke-width="1.500" stroke-linecap="round"/>
<path d="M12.300 22v5.200M17.300 22v5.200" stroke="#1b3440" stroke-width="1.800"/>
<path d="M9.600 27.600h3.600M16.600 27.600h3.800" stroke="#1b3440" stroke-width="1.800" stroke-linecap="round"/></svg>
<svg class="abs avatar" style="left:72.8px;top:462.2px" width="17.6" height="17.6" viewBox="0 0 32 32"><rect width="32" height="32" rx="3.600" fill="#0e1522"/>
<path d="M1 5.500L3.500 1h2v7.500Z" fill="#5cc3d6"/>
<rect x="0" y="7" width="4.500" height="10" fill="#1c2c40"/>
<rect x="28" y="1.500" width="3.500" height="9" fill="#353b42"/>
<rect x="6.500" y="2.800" width="18" height="1.800" fill="#27303c"/>
<rect x="0" y="26.500" width="32" height="5.500" fill="#2c2a1e"/>
<path d="M2 28.500l9 -1.500M20 27l10 1.500M2 31l7 -1" stroke="#a08a3a" stroke-width="1"/>
<circle cx="15.800" cy="17.600" r="12" fill="#6a4d10" opacity=".45"/>
<circle cx="15.800" cy="17.600" r="9.500" fill="#9a7210" stroke="#f0c530" stroke-width="1.900"/>
<circle cx="14.800" cy="18" r="6" fill="#5b3f0c" opacity=".4"/>
<rect x="29.600" y="16" width="1.600" height="9.300" fill="#d9b224"/>
<rect x="0" y="18.800" width="3" height="1.500" fill="#c6d0d0"/><rect x="0" y="23.300" width="3" height="1.700" fill="#dfe5e5"/>
<path d="M15.300 4.600c2.400 0 3.600 2 3.200 4.300c-.2 1-.6 1.700-1 2.200c1.800 .5 2.800 1.600 3.300 3.300c.5 1.700 1.600 2.200 1.400 3.600c-.2 1.300-1.800 1.700-2.300 2.900c1.300 2.500 2.300 5.300 2.300 8.100h-12c-.2-2.700 .2-5.300 1.300-7.800c-.8-1.500-1.300-3.200-.9-5c.4-2.200 1.300-4.200 3.300-5.100c-.7-.7-1.100-1.500-1.200-2.500c-.2-2.200 .8-4 2.600-4Z" fill="#11182c"/>
<ellipse cx="15.300" cy="8.700" rx="1.600" ry="1.900" fill="#f1e3e3"/>
<path d="M12.800 8c.3-3 4.700-3.200 5.200-.2c-1.600-1-3.500-.8-5.200 .2Z" fill="#0a0d16"/>
<path d="M15.600 13.200l1.400 3.200" stroke="#c9c2b0" stroke-width=".900"/>
<rect x="11.300" y="28.800" width="2.700" height="3.200" fill="#e3aaa3"/><rect x="17.200" y="29.200" width="3" height="2.800" fill="#dca29a"/></svg>
<a class="t" style="left:72.8px;top:328px;font-size:15.8px;letter-spacing:0.367px;color:#72b2b4;">July</a>
<span class="t" style="left:107.2px;top:328px;font-size:15.8px;letter-spacing:0.396px;">created pull request</span>
<a class="t" style="left:258.2px;top:328px;font-size:15.8px;letter-spacing:0.452px;color:#72b2b4;">websites/marketing#2</a>
<span class="t" style="left:424.8px;top:328px;font-size:15.8px;letter-spacing:0.307px;">now</span>
<span class="t" style="left:72.8px;top:358px;font-size:15.8px;letter-spacing:0.414px;">Add gitea actions workflow files</span>
<a class="t" style="left:72.8px;top:403px;font-size:15.8px;letter-spacing:0.574px;color:#72b2b4;">teabot</a>
<span class="t" style="left:124.6px;top:403px;font-size:15.8px;letter-spacing:0.475px;">pushed to</span>
<a class="t" style="left:202.8px;top:403px;font-size:15.8px;letter-spacing:-0.016px;color:#72b2b4;">main</a>
<span class="t" style="left:241.8px;top:403px;font-size:15.8px;letter-spacing:0.823px;">at</span>
<a class="t" style="left:260.4px;top:403px;font-size:15.8px;letter-spacing:0.421px;color:#72b2b4;">websites/marketing</a>
<span class="t" style="left:408.0px;top:403px;font-size:15.8px;letter-spacing:0.412px;">4 minutes ago</span>
<span class="t" style="left:112.0px;top:436px;font-size:14px;letter-spacing:0.365px;font-family:'Liberation Mono',monospace;-webkit-text-stroke:0.22px;">429894ea84</span>
<span class="t" style="left:112.0px;top:465px;font-size:14px;letter-spacing:0.365px;font-family:'Liberation Mono',monospace;-webkit-text-stroke:0.22px;">5dcf67a506</span>
<span class="t" style="left:221.5px;top:435px;font-size:15.8px;letter-spacing:0.353px;">Merge pull request &#39;Assign myself to the task.&#39; (</span>
<a class="t" style="left:569.5px;top:435px;font-size:15.8px;letter-spacing:-1.075px;color:#72b2b4;">#1</a>
<span class="t" style="left:586.5px;top:435px;font-size:15.8px;letter-spacing:0.392px;">) from July/marketing:july-patch-…</span>
<span class="t" style="left:221.5px;top:465px;font-size:15.8px;letter-spacing:0.035px;">Update README.md</span>
<a class="t" style="left:72.8px;top:496px;font-size:15.8px;letter-spacing:0.364px;color:#72b2b4;">Compare 2 commits &raquo;</a>
<a class="t" style="left:72.8px;top:542px;font-size:15.8px;letter-spacing:0.574px;color:#72b2b4;">teabot</a>
<span class="t" style="left:124.6px;top:542px;font-size:15.8px;letter-spacing:0.403px;">merged pull request</span>
<a class="t" style="left:276.2px;top:542px;font-size:15.8px;letter-spacing:0.378px;color:#72b2b4;">websites/marketing#1</a>
<span class="t" style="left:441.0px;top:542px;font-size:15.8px;letter-spacing:0.346px;">4 minutes ago</span>
<span class="t" style="left:72.8px;top:572px;font-size:15.8px;letter-spacing:0.354px;">Assign myself to the task.</span>
<a class="t" style="left:72.8px;top:618px;font-size:15.8px;letter-spacing:0.574px;color:#72b2b4;">teabot</a>
<span class="t" style="left:124.6px;top:618px;font-size:15.8px;letter-spacing:0.373px;">approved</span>
<a class="t" style="left:198.0px;top:618px;font-size:15.8px;letter-spacing:0.368px;color:#72b2b4;">websites/marketing#1</a>
<span class="t" style="left:362.5px;top:618px;font-size:15.8px;letter-spacing:0.387px;">4 minutes ago</span>
<a class="t" style="left:72.8px;top:648px;font-size:15.8px;letter-spacing:0.354px;color:#72b2b4;">Assign myself to the task.</a>
<a class="t" style="left:72.8px;top:694px;font-size:15.8px;letter-spacing:0.367px;color:#72b2b4;">July</a>
<span class="t" style="left:107.2px;top:694px;font-size:15.8px;letter-spacing:0.396px;">created pull request</span>
<a class="t" style="left:258.2px;top:694px;font-size:15.8px;letter-spacing:0.378px;color:#72b2b4;">websites/marketing#1</a>
<span class="t" style="left:422.8px;top:694px;font-size:15.8px;letter-spacing:0.312px;">7 minutes ago</span>
<span class="t" style="left:72.8px;top:724px;font-size:15.8px;letter-spacing:0.354px;">Assign myself to the task.</span>
</section>
</main>
<aside class="dashboard-repos">
<div class="abs" style="left:927px;top:141px;width:506px;height:49.5px;box-sizing:border-box;border:1px solid #3a3a3a;border-radius:4px;background:#000"></div>
<div class="abs" style="left:927px;top:141px;width:252.5px;height:49.5px;background:#454545;border-radius:4px 0 0 4px"></div>
<div class="abs" style="left:927px;top:206.5px;width:506px;height:560px;box-sizing:border-box;border:1px solid #303030;border-radius:5px;background:#1c1c1c"></div>
<div class="abs" style="left:928px;top:253px;width:504px;height:1px;background:#333"></div>
<div class="abs" style="left:1051.8px;top:220px;width:31.2px;height:21px;background:#707070;border-radius:4.5px"></div>
<div class="abs" style="left:1371px;top:270px;width:45px;height:42px;background:#242424;border-radius:0 4px 4px 0"></div>
<div class="abs" style="left:944px;top:270px;width:427px;height:42px;box-sizing:border-box;border:1px solid #5a9ca3;border-radius:4px 0 0 4px;background:#000"></div>
<div class="abs" style="left:997.8px;top:322.6px;width:24.3px;height:20px;background:#707070;border-radius:10px"></div>
<div class="abs" style="left:967.2px;top:352.2px;width:59.8px;height:2px;background:#fff"></div>
<div class="abs" style="left:928px;top:354.8px;width:504px;height:38.7px;background:#4b4b4b"></div>
<div class="abs" style="left:928px;top:432.0px;width:504px;height:1px;background:#333"></div>
<div class="abs" style="left:928px;top:471.0px;width:504px;height:1px;background:#333"></div>
<div class="abs" style="left:928px;top:510.0px;width:504px;height:1px;background:#333"></div>
<div class="abs" style="left:928px;top:549.0px;width:504px;height:1px;background:#333"></div>
<div class="abs" style="left:928px;top:588.0px;width:504px;height:1px;background:#333"></div>
<div class="abs" style="left:928px;top:627.0px;width:504px;height:1px;background:#333"></div>
<div class="abs" style="left:928px;top:666.0px;width:504px;height:1px;background:#333"></div>
<div class="abs" style="left:928px;top:705.0px;width:504px;height:1px;background:#333"></div>
<div class="abs" style="left:928px;top:744.0px;width:504px;height:1px;background:#333"></div>
<svg class="abs " style="left:1397.9px;top:221.6px" width="18" height="18" viewBox="0 0 16 16" fill="#fff"><path d="M7.750 2a.750.750 0 0 1 .750.750V7h4.250a.750.750 0 0 1 0 1.500H8.500v4.250a.750.750 0 0 1-1.500 0V8.500H2.750a.750.750 0 0 1 0-1.500H7V2.750A.750.750 0 0 1 7.750 2Z"/></svg>
<svg class="abs " style="left:957.1px;top:282.6px" width="18" height="18" viewBox="0 0 16 16" fill="#fff"><path d="M10.680 11.740a6 6 0 0 1-7.922-8.982 6 6 0 0 1 8.982 7.922l3.040 3.040a.749.749 0 0 1-.326 1.275.749.749 0 0 1-.734-.215ZM11.500 7a4.499 4.499 0 1 0-8.997 0A4.499 4.499 0 0 0 11.500 7Z"/></svg>
<svg class="abs " style="left:1384.7px;top:281.6px" width="18" height="18" viewBox="0 0 16 16" fill="#fff"><path d="M.750 3h14.500a.750.750 0 0 1 0 1.500H.750a.750.750 0 0 1 0-1.500ZM3 7.750A.750.750 0 0 1 3.750 7h8.500a.750.750 0 0 1 0 1.500h-8.500A.750.750 0 0 1 3 7.750Zm3 4a.750.750 0 0 1 .750-.750h2.500a.750.750 0 0 1 0 1.500h-2.500a.750.750 0 0 1-.750-.750Z"/></svg>
<svg class="abs " style="left:938.7px;top:365.2px" width="18" height="18" viewBox="0 0 16 16" fill="#9c9c9c"><path d="M4 4a4 4 0 0 1 8 0v2h.250c.966 0 1.750.784 1.750 1.750v5.500A1.750 1.750 0 0 1 12.250 15h-8.500A1.750 1.750 0 0 1 2 13.250v-5.500C2 6.784 2.784 6 3.750 6H4Zm8.250 3.500h-8.500a.250.250 0 0 0-.250.250v5.500c0 .138.112.250.250.250h8.500a.250.250 0 0 0 .250-.250v-5.500a.250.250 0 0 0-.250-.250ZM10.500 6V4a2.500 2.500 0 1 0-5 0v2Z"/></svg>
<svg class="abs " style="left:938.7px;top:404.0px" width="18" height="18" viewBox="0 0 16 16" fill="#9c9c9c"><path d="M2 2.500A2.500 2.500 0 0 1 4.500 0h8.750a.750.750 0 0 1 .750.750v12.500a.750.750 0 0 1-.750.750h-2.500a.750.750 0 0 1 0-1.500h1.750v-2h-8a1 1 0 0 0-.714 1.700.750.750 0 1 1-1.072 1.050A2.495 2.495 0 0 1 2 11.500Zm10.500-1h-8a1 1 0 0 0-1 1v6.708A2.486 2.486 0 0 1 4.500 9h8ZM5 12.250a.250.250 0 0 1 .250-.250h3.500a.250.250 0 0 1 .250.250v3.250a.250.250 0 0 1-.400.200l-1.450-1.087a.249.249 0 0 0-.300 0L5.400 15.700a.250.250 0 0 1-.400-.200Z"/></svg>
<svg class="abs " style="left:938.7px;top:443.0px" width="18" height="18" viewBox="0 0 16 16" fill="#9c9c9c"><path d="M2 2.500A2.500 2.500 0 0 1 4.500 0h8.750a.750.750 0 0 1 .750.750v12.500a.750.750 0 0 1-.750.750h-2.500a.750.750 0 0 1 0-1.500h1.750v-2h-8a1 1 0 0 0-.714 1.700.750.750 0 1 1-1.072 1.050A2.495 2.495 0 0 1 2 11.500Zm10.500-1h-8a1 1 0 0 0-1 1v6.708A2.486 2.486 0 0 1 4.500 9h8ZM5 12.250a.250.250 0 0 1 .250-.250h3.500a.250.250 0 0 1 .250.250v3.250a.250.250 0 0 1-.400.200l-1.450-1.087a.249.249 0 0 0-.300 0L5.400 15.700a.250.250 0 0 1-.400-.200Z"/></svg>
<svg class="abs " style="left:938.7px;top:482.0px" width="18" height="18" viewBox="0 0 16 16" fill="#9c9c9c"><path d="M2 2.500A2.500 2.500 0 0 1 4.500 0h8.750a.750.750 0 0 1 .750.750v12.500a.750.750 0 0 1-.750.750h-2.500a.750.750 0 0 1 0-1.500h1.750v-2h-8a1 1 0 0 0-.714 1.700.750.750 0 1 1-1.072 1.050A2.495 2.495 0 0 1 2 11.500Zm10.500-1h-8a1 1 0 0 0-1 1v6.708A2.486 2.486 0 0 1 4.500 9h8ZM5 12.250a.250.250 0 0 1 .250-.250h3.500a.250.250 0 0 1 .250.250v3.250a.250.250 0 0 1-.400.200l-1.450-1.087a.249.249 0 0 0-.300 0L5.400 15.700a.250.250 0 0 1-.400-.200Z"/></svg>
<svg class="abs " style="left:938.7px;top:521.0px" width="18" height="18" viewBox="0 0 16 16" fill="#9c9c9c"><path d="M2 2.500A2.500 2.500 0 0 1 4.500 0h8.750a.750.750 0 0 1 .750.750v12.500a.750.750 0 0 1-.750.750h-2.500a.750.750 0 0 1 0-1.500h1.750v-2h-8a1 1 0 0 0-.714 1.700.750.750 0 1 1-1.072 1.050A2.495 2.495 0 0 1 2 11.500Zm10.500-1h-8a1 1 0 0 0-1 1v6.708A2.486 2.486 0 0 1 4.500 9h8ZM5 12.250a.250.250 0 0 1 .250-.250h3.500a.250.250 0 0 1 .250.250v3.250a.250.250 0 0 1-.400.200l-1.450-1.087a.249.249 0 0 0-.300 0L5.400 15.700a.250.250 0 0 1-.400-.200Z"/></svg>
<svg class="abs " style="left:938.7px;top:560.0px" width="18" height="18" viewBox="0 0 16 16" fill="#9c9c9c"><path d="M2 2.500A2.500 2.500 0 0 1 4.500 0h8.750a.750.750 0 0 1 .750.750v12.500a.750.750 0 0 1-.750.750h-2.500a.750.750 0 0 1 0-1.500h1.750v-2h-8a1 1 0 0 0-.714 1.700.750.750 0 1 1-1.072 1.050A2.495 2.495 0 0 1 2 11.500Zm10.500-1h-8a1 1 0 0 0-1 1v6.708A2.486 2.486 0 0 1 4.500 9h8ZM5 12.250a.250.250 0 0 1 .250-.250h3.500a.250.250 0 0 1 .250.250v3.250a.250.250 0 0 1-.400.200l-1.450-1.087a.249.249 0 0 0-.300 0L5.400 15.700a.250.250 0 0 1-.400-.200Z"/></svg>
<svg class="abs " style="left:938.7px;top:599.0px" width="18" height="18" viewBox="0 0 16 16" fill="#9c9c9c"><path d="M2 2.500A2.500 2.500 0 0 1 4.500 0h8.750a.750.750 0 0 1 .750.750v12.500a.750.750 0 0 1-.750.750h-2.500a.750.750 0 0 1 0-1.500h1.750v-2h-8a1 1 0 0 0-.714 1.700.750.750 0 1 1-1.072 1.050A2.495 2.495 0 0 1 2 11.500Zm10.500-1h-8a1 1 0 0 0-1 1v6.708A2.486 2.486 0 0 1 4.500 9h8ZM5 12.250a.250.250 0 0 1 .250-.250h3.500a.250.250 0 0 1 .250.250v3.250a.250.250 0 0 1-.400.200l-1.450-1.087a.249.249 0 0 0-.300 0L5.400 15.700a.250.250 0 0 1-.400-.200Z"/></svg>
<svg class="abs " style="left:938.7px;top:638.0px" width="18" height="18" viewBox="0 0 16 16" fill="#9c9c9c"><path d="M2 2.500A2.500 2.500 0 0 1 4.500 0h8.750a.750.750 0 0 1 .750.750v12.500a.750.750 0 0 1-.750.750h-2.500a.750.750 0 0 1 0-1.500h1.750v-2h-8a1 1 0 0 0-.714 1.700.750.750 0 1 1-1.072 1.050A2.495 2.495 0 0 1 2 11.500Zm10.500-1h-8a1 1 0 0 0-1 1v6.708A2.486 2.486 0 0 1 4.500 9h8ZM5 12.250a.250.250 0 0 1 .250-.250h3.500a.250.250 0 0 1 .250.250v3.250a.250.250 0 0 1-.400.200l-1.450-1.087a.249.249 0 0 0-.300 0L5.400 15.700a.250.250 0 0 1-.400-.200Z"/></svg>
<svg class="abs " style="left:938.7px;top:677.0px" width="18" height="18" viewBox="0 0 16 16" fill="#9c9c9c"><path d="M2 2.500A2.500 2.500 0 0 1 4.500 0h8.750a.750.750 0 0 1 .750.750v12.500a.750.750 0 0 1-.750.750h-2.500a.750.750 0 0 1 0-1.500h1.750v-2h-8a1 1 0 0 0-.714 1.700.750.750 0 1 1-1.072 1.050A2.495 2.495 0 0 1 2 11.500Zm10.500-1h-8a1 1 0 0 0-1 1v6.708A2.486 2.486 0 0 1 4.500 9h8ZM5 12.250a.250.250 0 0 1 .250-.250h3.500a.250.250 0 0 1 .250.250v3.250a.250.250 0 0 1-.400.200l-1.450-1.087a.249.249 0 0 0-.300 0L5.400 15.700a.250.250 0 0 1-.400-.200Z"/></svg>
<svg class="abs " style="left:938.7px;top:716.0px" width="18" height="18" viewBox="0 0 16 16" fill="#9c9c9c"><path d="M2 2.500A2.500 2.500 0 0 1 4.500 0h8.750a.750.750 0 0 1 .750.750v12.500a.750.750 0 0 1-.750.750h-2.500a.750.750 0 0 1 0-1.500h1.750v-2h-8a1 1 0 0 0-.714 1.700.750.750 0 1 1-1.072 1.050A2.495 2.495 0 0 1 2 11.500Zm10.500-1h-8a1 1 0 0 0-1 1v6.708A2.486 2.486 0 0 1 4.500 9h8ZM5 12.250a.250.250 0 0 1 .250-.250h3.500a.250.250 0 0 1 .250.250v3.250a.250.250 0 0 1-.400.200l-1.450-1.087a.249.249 0 0 0-.300 0L5.400 15.700a.250.250 0 0 1-.400-.200Z"/></svg>
<svg class="abs " style="left:1402.4px;top:365.0px" width="18" height="18" viewBox="0 0 16 16" fill="#e2574a"><path d="M3.720 3.720a.750.750 0 0 1 1.060 0L8 6.940l3.220-3.220a.749.749 0 0 1 1.275.326.749.749 0 0 1-.215.734L9.060 8l3.220 3.220a.749.749 0 0 1-.326 1.275.749.749 0 0 1-.734-.215L8 9.060l-3.220 3.220a.751.751 0 0 1-1.042-.018.751.751 0 0 1-.018-1.042L6.940 8 3.720 4.780a.750.750 0 0 1 0-1.060Z"/></svg>
<svg class="abs " style="left:1402.6px;top:443.0px" width="18" height="18" viewBox="0 0 16 16" fill="#5fbf5f"><path d="M13.780 4.220a.750.750 0 0 1 0 1.060l-7.250 7.250a.750.750 0 0 1-1.060 0L2.220 9.280a.751.751 0 0 1 .018-1.042.751.751 0 0 1 1.042-.018L6 10.940l6.720-6.720a.750.750 0 0 1 1.060 0Z"/></svg>
<svg class="abs " style="left:1402.4px;top:638.0px" width="18" height="18" viewBox="0 0 16 16" fill="#e2574a"><path d="M3.720 3.720a.750.750 0 0 1 1.060 0L8 6.940l3.220-3.220a.749.749 0 0 1 1.275.326.749.749 0 0 1-.215.734L9.060 8l3.220 3.220a.749.749 0 0 1-.326 1.275.749.749 0 0 1-.734-.215L8 9.060l-3.220 3.220a.751.751 0 0 1-1.042-.018.751.751 0 0 1-.018-1.042L6.940 8 3.720 4.780a.750.750 0 0 1 0-1.060Z"/></svg>
<span class="t" style="left:1015.0px;top:160px;font-size:15.8px;letter-spacing:0.253px;">Repository</span>
<span class="t" style="left:1259.2px;top:160px;font-size:15.8px;letter-spacing:0.319px;">Organization</span>
<span class="t" style="left:944.3px;top:221px;font-size:18px;letter-spacing:-0.059px;-webkit-text-stroke:0.7px;">Repositories</span>
<span class="t" style="left:1058.9px;top:224px;font-size:15px;letter-spacing:0.115px;font-weight:bold;">69</span>
<span class="t" style="left:986.8px;top:285px;font-size:15.8px;letter-spacing:0.207px;color:#bcbcbc;">Find a repository...</span>
<span class="t" style="left:972.0px;top:326px;font-size:14.6px;letter-spacing:0.037px;-webkit-text-stroke:0.5px;">All</span>
<span class="t" style="left:1003.8px;top:328px;font-size:10.8px;letter-spacing:0.487px;font-weight:bold;">69</span>
<span class="t" style="left:1060.0px;top:326px;font-size:14.6px;letter-spacing:-0.394px;color:#c4c4c4;">Sources</span>
<span class="t" style="left:1149.3px;top:326px;font-size:14.6px;letter-spacing:-0.525px;color:#c4c4c4;">Forks</span>
<span class="t" style="left:1222.0px;top:326px;font-size:14.6px;letter-spacing:-0.186px;color:#c4c4c4;">Mirrors</span>
<span class="t" style="left:1304.9px;top:326px;font-size:14.6px;letter-spacing:-0.210px;color:#c4c4c4;">Collaborative</span>
<span class="t" style="left:967.4px;top:368px;font-size:15.8px;letter-spacing:0.618px;">teabot/test-actions-schedule</span>
<span class="t" style="left:967.4px;top:407px;font-size:15.8px;letter-spacing:0.415px;">websites/marketing</span>
<span class="t" style="left:967.4px;top:446px;font-size:15.8px;letter-spacing:0.676px;">teabot/test-skipped-actions-steps</span>
<span class="t" style="left:967.4px;top:485px;font-size:15.8px;letter-spacing:0.642px;">teabot/test-signed-commits-require</span>
<span class="t" style="left:967.4px;top:524px;font-size:15.8px;letter-spacing:0.606px;">teabot/test-sync-github-releases2</span>
<span class="t" style="left:967.4px;top:563px;font-size:15.8px;letter-spacing:0.622px;">teabot/test-sync-github-releases</span>
<span class="t" style="left:967.4px;top:602px;font-size:15.8px;letter-spacing:0.514px;">teabot/kernel-source</span>
<span class="t" style="left:967.4px;top:641px;font-size:15.8px;letter-spacing:0.702px;">teabot/test-actions-dy-matrix</span>
<span class="t" style="left:967.4px;top:680px;font-size:15.8px;letter-spacing:0.659px;">teabot/test-agit</span>
<span class="t" style="left:967.4px;top:719px;font-size:15.8px;letter-spacing:0.657px;">teabot/test-public</span>
</aside>
</div></body></html>
